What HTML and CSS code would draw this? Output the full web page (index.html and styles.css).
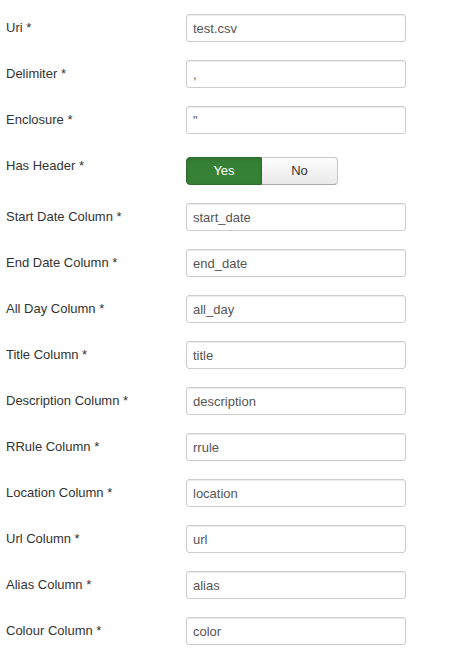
FILE: index.html
```html
<!DOCTYPE html>
<html>
<head>
<meta charset="utf-8">
<link rel="stylesheet" href="styles.css">
</head>
<body>
<form class="form">
  <div class="group"><label class="label">Uri *</label><div class="controls"><input class="input" type="text" value="test.csv"></div></div>
  <div class="group"><label class="label">Delimiter *</label><div class="controls"><input class="input" type="text" value=","></div></div>
  <div class="group"><label class="label">Enclosure *</label><div class="controls"><input class="input" type="text" value="&quot;"></div></div>
  <div class="group"><label class="label">Has Header *</label><div class="controls"><div class="btn-group"><span class="btn btn-yes">Yes</span><span class="btn btn-no">No</span></div></div></div>
  <div class="group"><label class="label">Start Date Column *</label><div class="controls"><input class="input" type="text" value="start_date"></div></div>
  <div class="group"><label class="label">End Date Column *</label><div class="controls"><input class="input" type="text" value="end_date"></div></div>
  <div class="group"><label class="label">All Day Column *</label><div class="controls"><input class="input" type="text" value="all_day"></div></div>
  <div class="group"><label class="label">Title Column *</label><div class="controls"><input class="input" type="text" value="title"></div></div>
  <div class="group"><label class="label">Description Column *</label><div class="controls"><input class="input" type="text" value="description"></div></div>
  <div class="group"><label class="label">RRule Column *</label><div class="controls"><input class="input" type="text" value="rrule"></div></div>
  <div class="group"><label class="label">Location Column *</label><div class="controls"><input class="input" type="text" value="location"></div></div>
  <div class="group"><label class="label">Url Column *</label><div class="controls"><input class="input" type="text" value="url"></div></div>
  <div class="group"><label class="label">Alias Column *</label><div class="controls"><input class="input" type="text" value="alias"></div></div>
  <div class="group"><label class="label">Colour Column *</label><div class="controls"><input class="input" type="text" value="color"></div></div>
</form>
</body>
</html>
```
FILE: styles.css
```css
html, body {
  margin: 0;
  padding: 0;
  background: #fff;
}
body {
  font-family: "Liberation Sans", Arial, sans-serif;
  font-size: 13px;
  line-height: 18px;
  color: #333;
}
.form {
  padding: 14px 6px 0 6px;
}
.group {
  display: flex;
  margin-bottom: 18px;
}
.label {
  width: 180px;
  flex: none;
  padding-top: 5px;
  color: #333;
}
.controls {
  flex: none;
}
.input {
  display: block;
  box-sizing: border-box;
  width: 220px;
  height: 28px;
  margin: 0;
  padding: 4px 6px;
  border: 1px solid #ccc;
  border-radius: 3px;
  font-family: "Liberation Sans", Arial, sans-serif;
  font-size: 13px;
  line-height: 18px;
  color: #555;
  background: #fff;
  box-shadow: inset 0 1px 1px rgba(0,0,0,0.075);
}
.btn-group {
  display: flex;
  margin-top: 5px;
}
.btn {
  box-sizing: border-box;
  width: 76px;
  height: 28px;
  padding: 4px 0;
  text-align: center;
  font-size: 13px;
  line-height: 18px;
  border: 1px solid #b3b3b3;
}
.btn-yes {
  background: #378137;
  border-color: #2f6e2f;
  color: #fff;
  border-radius: 4px 0 0 4px;
  box-shadow: inset 0 2px 4px rgba(0,0,0,0.1);
}
.btn-no {
  background: linear-gradient(#fdfdfd, #e9e9e9);
  border-color: #c8c8c8 #c8c8c8 #a9a9a9;
  border-left: 0;
  color: #333;
  border-radius: 0 4px 4px 0;
}
```
